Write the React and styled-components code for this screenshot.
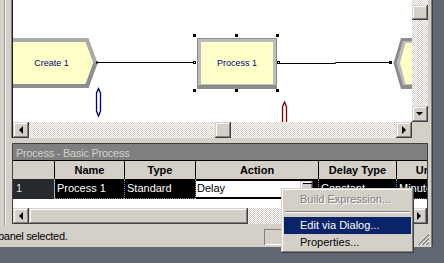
import React from "react";
import styled, { createGlobalStyle, css } from "styled-components";

const face = "#d4d0c8";
const slate = "#5f6770";
const COLS = "41px 70px 71px 123px 78px 66px";

const GlobalStyle = createGlobalStyle`
  html, body { margin: 0; padding: 0; }
  body {
    background: ${slate};
    font-family: "Liberation Sans", Arial, sans-serif;
    font-size: 11px;
    overflow: hidden;
  }
  * { box-sizing: border-box; }
`;

const raised = css`
  background: ${face};
  box-shadow: inset -1px -1px #404040, inset 1px 1px ${face},
    inset -2px -2px #808080, inset 2px 2px #fff;
`;

const checker = css`
  background-color: #fff;
  background-image: repeating-conic-gradient(${face} 0 25%, #fff 0 50%);
  background-size: 2px 2px;
`;

const Desktop = styled.div`
  position: relative;
  width: 444px;
  height: 263px;
  overflow: hidden;
  background: ${slate};
`;

const AppWindow = styled.div`
  width: 433px;
  height: 247px;
  display: flex;
  flex-direction: column;
  background: ${face};
  border-right: 1px solid #404040;
  box-shadow: inset -1px 0 #808080;
`;

const Workspace = styled.div`
  flex: 0 0 226px;
  display: flex;
`;

const Splitter = styled.div`
  flex: 0 0 11px;
  background: linear-gradient(
    to right,
    ${face} 0 4px,
    #9a9a9a 4px 5px,
    #f4f4f4 5px 6px,
    ${face} 6px
  );
`;

const MainColumn = styled.div`
  flex: 0 0 417px;
  display: flex;
  flex-direction: column;
`;

const CanvasFrame = styled.div`
  flex: 0 0 138px;
  display: grid;
  grid-template-columns: 399px 16px;
  grid-template-rows: 122px 16px;
  padding-left: 2px;
  box-shadow: inset 1px 0 #808080, inset 2px 0 #202020;
`;

const Canvas = styled.div`
  background: #fff;
  overflow: hidden;
  svg { display: block; }
`;

const VScroll = styled.div`
  display: flex;
  flex-direction: column;
`;

const HScroll = styled.div`
  display: flex;
  flex: ${(p) => (p.$fixed ? `0 0 ${p.$fixed}` : "none")};
`;

const Track = styled.div`
  ${checker};
  flex: ${(p) => (p.$grow ? "1 1 auto" : `0 0 ${p.$size}`)};
`;

const Thumb = styled.div`
  ${raised};
  flex: 0 0 ${(p) => p.$size};
`;

const ScrollButton = styled.div`
  ${raised};
  flex: 0 0 ${(p) => p.$size};
  display: flex;
  align-items: center;
  justify-content: center;
  overflow: hidden;
  svg { flex: none; display: block; }
`;

const Corner = styled.div`
  background: ${face};
`;

const Gap = styled.div`
  flex: 0 0 5px;
`;

const Panel = styled.div`
  flex: 0 0 81px;
  margin-left: 1px;
  width: 416px;
  display: flex;
  flex-direction: column;
  border: 1px solid #404040;
  border-bottom: none;
  overflow: hidden;
`;

const TitleBar = styled.div`
  flex: 0 0 16px;
  background: #808080;
  color: ${face};
  padding: 2px 0 0 3px;
  line-height: 14px;
  letter-spacing: -0.25px;
  white-space: nowrap;
`;

const HeaderRow = styled.div`
  flex: 0 0 19px;
  display: grid;
  grid-template-columns: ${COLS};
  border-top: 1px solid #000;
  background: ${face};
`;

const HeaderCell = styled.div`
  border-left: ${(p) => (p.$first ? "none" : "1px solid #000")};
  font-weight: bold;
  text-align: center;
  line-height: 18px;
  white-space: nowrap;
  overflow: hidden;
  color: #000;
`;

const DataRow = styled.div`
  flex: 0 0 20px;
  display: grid;
  grid-template-columns: ${COLS};
  background: #000;
`;

const RowHead = styled.div`
  background: #26292e;
  color: #e6e6e6;
  padding-left: 3px;
  line-height: 18px;
`;

const DataCell = styled.div`
  border-left: 1px ${(p) => (p.$solid ? "solid #b0b0b0" : "dotted #8c8c8c")};
  border-bottom: 1px dotted #8c8c8c;
  color: #fff;
  padding-left: 2px;
  line-height: 18px;
  white-space: nowrap;
  overflow: hidden;
`;

const EditCell = styled.div`
  border-left: 1px dotted #8c8c8c;
  padding: 2px 5px 0 0;
`;

const Editor = styled.div`
  height: 16px;
  display: flex;
  background: #fff;
  color: #000;
`;

const EditorText = styled.span`
  flex: 1;
  padding-left: 1px;
  line-height: 14px;
`;

const DropButton = styled.div`
  ${raised};
  flex: 0 0 13px;
  padding: 2px 1px 0 3px;
`;

const Dash = styled.div`
  height: 1px;
  background: #000;
`;

const Filler = styled.div`
  flex: 0 0 9px;
  background: #fff;
`;

const StatusBar = styled.div`
  flex: 0 0 21px;
  display: flex;
  align-items: center;
  overflow: hidden;
`;

const StatusText = styled.div`
  flex: 0 0 266px;
  margin-left: -2px;
  letter-spacing: -0.3px;
  line-height: 21px;
  white-space: nowrap;
  color: #000;
`;

const StatusPane = styled.div`
  flex: 0 0 150px;
  height: 16px;
  box-shadow: inset 1px 1px #808080, inset -1px -1px #fff;
`;

const Grip = styled.div`
  flex: 0 0 12px;
  height: 12px;
  margin: 0 3px 2px auto;
  align-self: flex-end;
  svg { display: block; }
`;

const Menu = styled.div`
  position: absolute;
  left: 281px;
  top: 188px;
  width: 133px;
  padding: 3px 3px 2px;
  background: ${face};
  box-shadow: inset -1px -1px #404040, inset 1px 1px ${face},
    inset -2px -2px #808080, inset 2px 2px #fff;
`;

const MenuItem = styled.div`
  height: 17px;
  line-height: 17px;
  padding-left: 16px;
  white-space: nowrap;
  background: ${(p) => (p.$active ? "#0a246a" : "transparent")};
  color: ${(p) => (p.$active ? "#fff" : p.$disabled ? "#808080" : "#000")};
  text-shadow: ${(p) => (p.$disabled ? "1px 1px #fff" : "none")};
`;

const MenuSeparator = styled.div`
  height: 2px;
  margin: 3px 1px 4px;
  border-top: 1px solid #808080;
  border-bottom: 1px solid #fff;
`;

const ARROWS = {
  left: "6,8 10,4 10,12",
  right: "6,4 10,8 6,12",
  down: "4,6 11,6 7.5,9.5",
};

const Arrow = ({ dir }) => (
  <svg width="16" height="16" viewBox="0 0 16 16">
    <polygon points={ARROWS[dir]} fill="#000" />
  </svg>
);

const Handle = ({ x, y }) => <rect x={x} y={y} width="3" height="3" fill="#000" />;

const Diagram = () => (
  <svg width="399" height="122" viewBox="13 0 399 122">
    {/* connectors */}
    <path d="M97 62.5 H194" stroke="#000" strokeWidth="1" fill="none" />
    <path d="M279 63.5 H335.5 V62.5 H390" stroke="#000" strokeWidth="1" fill="none" />

    {/* Create 1 */}
    <polygon points="0,40 87,40 95.5,63 87,86 0,86" fill="#ffffc8" stroke="#a9a9a9" strokeWidth="4" strokeLinejoin="miter" />
    <polyline points="95.5,63 87,86 0,86" fill="none" stroke="#8e8e8e" strokeWidth="4" strokeLinejoin="miter" />
    <rect x="96" y="61.5" width="2" height="2" fill="#000" />
    <text x="51.5" y="65.5" textAnchor="middle" fontSize="9" fill="#000080" fontFamily="Liberation Sans, Arial, sans-serif">
      Create 1
    </text>

    {/* Process 1 */}
    <rect x="197" y="38" width="80" height="51" fill="#8c8c8c" />
    <rect x="198" y="39" width="78" height="46" fill="#bcbcbc" />
    <rect x="201" y="42" width="72" height="42" fill="#ffffc8" />
    <text x="237" y="65.5" textAnchor="middle" fontSize="9" fill="#000080" fontFamily="Liberation Sans, Arial, sans-serif">
      Process 1
    </text>
    <Handle x={193} y={34} />
    <Handle x={235} y={34} />
    <Handle x={276} y={34} />
    <Handle x={193} y={89} />
    <Handle x={235} y={89} />
    <Handle x={276} y={89} />
    <rect x="193.5" y="61.5" width="2" height="2" fill="#fff" stroke="#000" strokeWidth="1" />
    <rect x="277.5" y="61.5" width="2" height="2" fill="#fff" stroke="#000" strokeWidth="1" />

    {/* next module (clipped) */}
    <polygon points="393.5,63 401,38 420,38 420,89 401,89" fill="#8c8c8c" />
    <polygon points="396.5,63 403,41 420,41 420,85 403,85" fill="#bcbcbc" />
    <polygon points="400,63 405.5,43 420,43 420,84 405.5,84" fill="#ffffc8" />
    <rect x="389" y="61" width="3" height="3" fill="#000" />

    {/* entity pictures */}
    <path d="M98.5 88.5 L100.5 93 V111 L98.5 116 L96.5 111 V93 Z" fill="#fff" stroke="#000080" strokeWidth="1.3" />
    <path d="M282.5 126 V107 L284.5 102 L286.5 107 V126" fill="#fff" stroke="#800000" strokeWidth="1.3" />
  </svg>
);

const GripIcon = () => (
  <svg width="12" height="12" viewBox="0 0 12 12">
    {[0, 4, 8].map((k) => (
      <g key={k}>
        <line x1={12} y1={k} x2={k} y2={12} stroke="#fff" strokeWidth="1" />
        <line x1={12} y1={k + 1.2} x2={k + 1.2} y2={12} stroke="#808080" strokeWidth="1.4" />
      </g>
    ))}
  </svg>
);

export default function App() {
  return (
    <>
      <GlobalStyle />
      <Desktop>
        <AppWindow>
          <Workspace>
            <Splitter />
            <MainColumn>
              <CanvasFrame>
                <Canvas>
                  <Diagram />
                </Canvas>
                <VScroll>
                  <Track $size="5px" />
                  <Thumb $size="15px" />
                  <Track $grow />
                  <ScrollButton $size="16px">
                    <Arrow dir="down" />
                  </ScrollButton>
                </VScroll>
                <HScroll>
                  <ScrollButton $size="16px">
                    <Arrow dir="left" />
                  </ScrollButton>
                  <Track $size="186px" />
                  <Thumb $size="16px" />
                  <Track $grow />
                  <ScrollButton $size="16px">
                    <Arrow dir="right" />
                  </ScrollButton>
                </HScroll>
                <Corner />
              </CanvasFrame>
              <Gap />
              <Panel>
                <TitleBar>Process - Basic Process</TitleBar>
                <HeaderRow>
                  <HeaderCell $first />
                  <HeaderCell>Name</HeaderCell>
                  <HeaderCell>Type</HeaderCell>
                  <HeaderCell>Action</HeaderCell>
                  <HeaderCell>Delay Type</HeaderCell>
                  <HeaderCell>Units</HeaderCell>
                </HeaderRow>
                <DataRow>
                  <RowHead>1</RowHead>
                  <DataCell $solid>Process 1</DataCell>
                  <DataCell>Standard</DataCell>
                  <EditCell>
                    <Editor>
                      <EditorText>Delay</EditorText>
                      <DropButton>
                        <Dash />
                      </DropButton>
                    </Editor>
                  </EditCell>
                  <DataCell>Constant</DataCell>
                  <DataCell>Minute(s)</DataCell>
                </DataRow>
                <Filler />
                <HScroll $fixed="16px">
                  <ScrollButton $size="16px">
                    <Arrow dir="left" />
                  </ScrollButton>
                  <Thumb $size="219px" />
                  <Track $grow />
                  <ScrollButton $size="16px">
                    <Arrow dir="right" />
                  </ScrollButton>
                </HScroll>
              </Panel>
            </MainColumn>
          </Workspace>
          <StatusBar>
            <StatusText>panel selected.</StatusText>
            <StatusPane />
            <Grip>
              <GripIcon />
            </Grip>
          </StatusBar>
        </AppWindow>
        <Menu>
          <MenuItem $disabled>Build Expression...</MenuItem>
          <MenuSeparator />
          <MenuItem $active>Edit via Dialog...</MenuItem>
          <MenuItem>Properties...</MenuItem>
        </Menu>
      </Desktop>
    </>
  );
}
